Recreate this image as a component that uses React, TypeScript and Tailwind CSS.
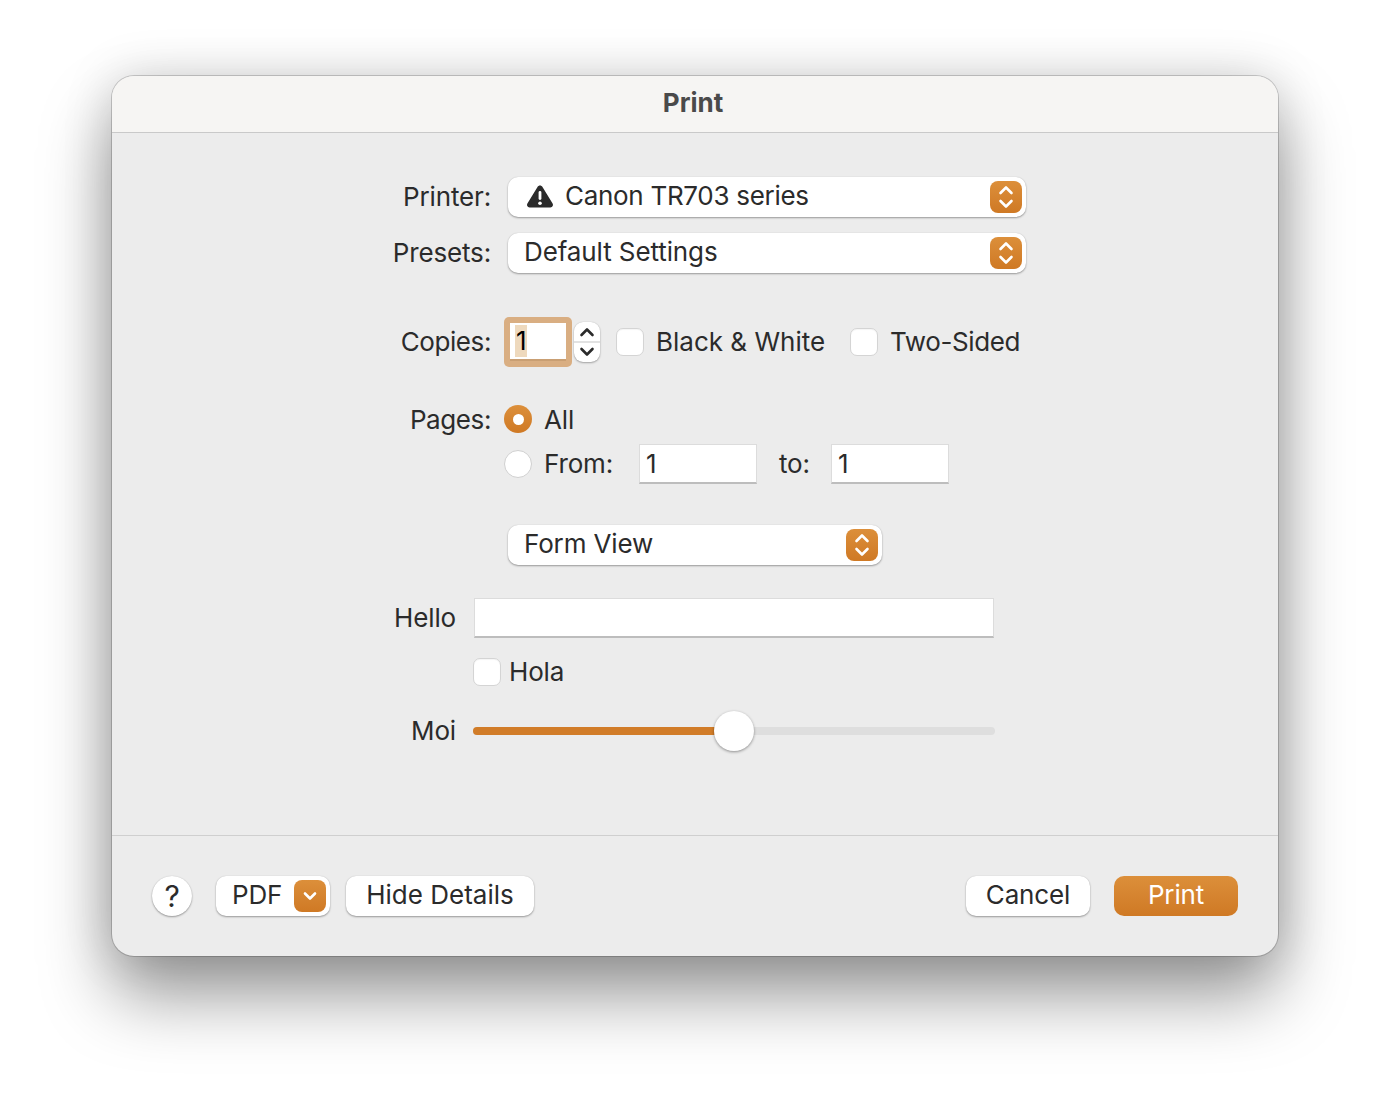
import type { ReactNode } from 'react';

const font = "font-['Inter','Liberation_Sans',sans-serif]";

function Stepper() {
  return (
    <svg width="16" height="24" viewBox="0 0 16 24" fill="none" stroke="#fff" strokeWidth="2.6" strokeLinecap="round" strokeLinejoin="round">
      <path d="M2.5 8 8 2.5 13.5 8" />
      <path d="M2.5 16 8 21.5 13.5 16" />
    </svg>
  );
}

function Select({ width, children }: { width: string; children: ReactNode }) {
  return (
    <div className={`flex h-10 items-center justify-between rounded-[10px] bg-white pr-1 shadow-[0_1px_2px_rgba(0,0,0,0.35),0_0_1px_rgba(0,0,0,0.15)] ${width}`}>
      <div className="flex items-center pb-[2px]">{children}</div>
      <div className="flex h-8 w-8 items-center justify-center rounded-lg bg-gradient-to-b from-[#dc8f3a] to-[#cf7924]">
        <Stepper />
      </div>
    </div>
  );
}

function Checkbox() {
  return <div className="h-7 w-7 shrink-0 rounded-[7px] border border-[#d4d4d4] bg-white shadow-[inset_0_1px_1px_rgba(0,0,0,0.04)]" />;
}

function FieldRow({ label, top, children }: { label: ReactNode; top: string; children: ReactNode }) {
  return (
    <div className={`flex items-center ${top}`}>
      <div className="w-[379px] shrink-0 text-right">{label}</div>
      {children}
    </div>
  );
}

function PushButton({ width, children }: { width: string; children: ReactNode }) {
  return (
    <div className={`flex h-10 items-center justify-center rounded-[10px] bg-white pb-[2px] shadow-[0_1px_2px_rgba(0,0,0,0.35),0_0_1px_rgba(0,0,0,0.15)] ${width}`}>
      {children}
    </div>
  );
}

function TextBox({ width, value }: { width: string; value?: string }) {
  return (
    <div className={`flex h-10 items-center border border-[#dcdcdc] border-b-2 border-b-[#bdbdbd] bg-white pl-[6px] ${width}`}>
      {value}
    </div>
  );
}

export default function App() {
  return (
    <div className={`min-h-screen bg-white px-[112px] pt-[76px] text-[26px] leading-8 tracking-[-0.15px] text-[#2b2b2b] ${font}`}>
      <div className="flex h-[880px] flex-col overflow-hidden rounded-[22px] bg-[#ececec] shadow-[0_0_0_1px_rgba(0,0,0,0.18),0_40px_70px_rgba(0,0,0,0.4),0_0_50px_rgba(0,0,0,0.15)]">
        {/* Title bar */}
        <div className="flex h-[57px] shrink-0 items-center justify-center border-b border-[#c9c9c9] bg-[#f6f5f3] pb-[2px] pr-[4px] font-bold tracking-normal text-[#4a4a4a]">
          Print
        </div>

        {/* Form */}
        <div className="flex-1 pt-[44px]">
          <FieldRow label="Printer:" top="">
            <div className="ml-[17px]">
              <Select width="w-[518px]">
                <svg className="ml-[18px] mr-[11px]" width="28" height="24" viewBox="0 0 28 24">
                  <path d="M14 1.5c-1 0-1.9.5-2.5 1.5L1.4 19.6C.4 21.3 1.5 23.4 3.6 23.4h20.8c2.1 0 3.2-2.1 2.2-3.8L16.5 3C15.9 2 15 1.5 14 1.5z" fill="#2b2b2b" />
                  <rect x="12.6" y="7" width="2.8" height="9" rx="1.4" fill="#fff" />
                  <circle cx="14" cy="19.2" r="1.8" fill="#fff" />
                </svg>
                <span className="tracking-[-0.3px]">Canon TR703 series</span>
              </Select>
            </div>
          </FieldRow>
          <FieldRow label="Presets:" top="mt-4">
            <div className="ml-[17px]">
              <Select width="w-[518px]">
                <span className="pl-4 tracking-[-0.1px]">Default Settings</span>
              </Select>
            </div>
          </FieldRow>

          <FieldRow label={<span className="tracking-[-0.4px]">Copies:</span>} top="mt-[44px]">
            <div className="ml-[13px] flex h-[50px] w-[68px] items-center justify-center rounded-[5px] bg-[#d9ae82]">
              <div className="flex h-[38px] w-[56px] items-center border-b-2 border-[#c99f73] bg-white pl-[5px]">
                <span className="bg-[#eed9bd] px-[1px] text-black">1</span>
              </div>
            </div>
            <div className="ml-[2px] flex h-10 w-[26px] flex-col items-center justify-between rounded-[9px] bg-white shadow-[0_1px_2px_rgba(0,0,0,0.3),0_0_1px_rgba(0,0,0,0.2)]">
              <svg className="mt-[3px]" width="16" height="14" viewBox="0 0 16 14" fill="none" stroke="#2b2b2b" strokeWidth="2.6" strokeLinecap="round" strokeLinejoin="round">
                <path d="M2.5 10 8 4.5l5.5 5.5" />
              </svg>
              <div className="h-[2px] w-full bg-[#e2e2e2]" />
              <svg className="mb-[3px]" width="16" height="14" viewBox="0 0 16 14" fill="none" stroke="#2b2b2b" strokeWidth="2.6" strokeLinecap="round" strokeLinejoin="round">
                <path d="M2.5 4 8 9.5 13.5 4" />
              </svg>
            </div>
            <div className="ml-[16px]"><Checkbox /></div>
            <span className="ml-3 tracking-normal">Black &amp; White</span>
            <div className="ml-[25px]"><Checkbox /></div>
            <span className="ml-3 tracking-[-0.4px]">Two-Sided</span>
          </FieldRow>

          <FieldRow label={<span className="relative top-px tracking-[-0.4px]">Pages:</span>} top="mt-[36px]">
            <div className="ml-[13px] flex h-7 w-7 items-center justify-center rounded-full bg-gradient-to-b from-[#dc8f3a] to-[#cf7924]">
              <div className="h-[11px] w-[11px] rounded-full bg-white" />
            </div>
            <span className="relative top-px ml-3">All</span>
          </FieldRow>
          <div className="mt-[9px] flex h-10 items-center pl-[392px]">
            <div className="-mt-px h-7 w-7 rounded-full border border-[#d0d0d0] bg-white" />
            <span className="ml-3 w-[95px]">From:</span>
            <TextBox width="w-[118px]" value="1" />
            <span className="ml-[22px] w-[52px]">to:</span>
            <TextBox width="w-[118px]" value="1" />
          </div>

          <div className="mt-[41px] pl-[396px]">
            <Select width="w-[374px]">
              <span className="pl-4">Form View</span>
            </Select>
          </div>

          <div className="mt-[33px] flex items-center">
            <div className="w-[344px] shrink-0 text-right">Hello</div>
            <div className="ml-[18px]"><TextBox width="w-[520px]" /></div>
          </div>
          <div className="mt-[18px] flex items-center pl-[361px]">
            <Checkbox />
            <span className="ml-2">Hola</span>
          </div>
          <div className="mt-[23px] flex h-10 items-center">
            <div className="w-[344px] shrink-0 text-right">Moi</div>
            {/* Slider */}
            <div className="relative ml-[17px] h-2 w-[522px] rounded-full bg-[#dedede]">
              <div className="h-2 w-[261px] rounded-full bg-[#d17c28]" />
              <div className="absolute left-[241px] top-[-16px] h-10 w-10 rounded-full bg-white shadow-[0_1px_3px_rgba(0,0,0,0.4)]" />
            </div>
          </div>
        </div>

        {/* Footer */}
        <div className="flex h-[121px] shrink-0 items-start border-t border-[#cfcfcf] px-10 pt-10">
          <div className="flex h-10 w-10 items-center justify-center rounded-full bg-white text-[30px] shadow-[0_1px_2px_rgba(0,0,0,0.35),0_0_1px_rgba(0,0,0,0.15)]">?</div>
          <div className="ml-6 flex h-10 w-[114px] items-center justify-between rounded-[10px] bg-white pl-[16px] pr-[4px] shadow-[0_1px_2px_rgba(0,0,0,0.35),0_0_1px_rgba(0,0,0,0.15)]">
            <span className="pb-[2px]">PDF</span>
            <div className="flex h-8 w-8 items-center justify-center rounded-lg bg-gradient-to-b from-[#dc8f3a] to-[#cf7924]">
              <svg width="16" height="12" viewBox="0 0 16 12" fill="none" stroke="#fff" strokeWidth="2.6" strokeLinecap="round" strokeLinejoin="round">
                <path d="M3 3.5 8 8.5l5-5" />
              </svg>
            </div>
          </div>
          <div className="ml-4"><PushButton width="w-[188px]"><span className="tracking-normal">Hide Details</span></PushButton></div>
          <div className="ml-auto"><PushButton width="w-[124px]">Cancel</PushButton></div>
          <div className="ml-6 flex h-10 w-[124px] items-center justify-center rounded-[10px] bg-gradient-to-b from-[#dc8f3a] to-[#cf7924] pb-[2px] text-white">
            Print
          </div>
        </div>
      </div>
    </div>
  );
}
